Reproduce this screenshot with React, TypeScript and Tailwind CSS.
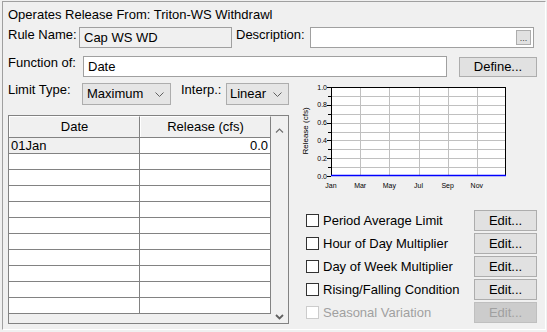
import React from 'react';

const rows = Array.from({ length: 11 }, (_, i) => i);
const options = [
  { label: 'Period Average Limit', enabled: true },
  { label: 'Hour of Day Multiplier', enabled: true },
  { label: 'Day of Week Multiplier', enabled: true },
  { label: 'Rising/Falling Condition', enabled: true },
  { label: 'Seasonal Variation', enabled: false },
];

const Chevron: React.FC = () => (
  <svg width="9" height="5" viewBox="0 0 9 5" className="ml-auto mr-[6px]">
    <polyline points="0.5,0.5 4.5,4.5 8.5,0.5" fill="none" stroke="#606060" strokeWidth="1" />
  </svg>
);

const Chart: React.FC = () => {
  const left = 31;
  const right = 206;
  const top = 4;
  const bottom = 93;
  const step = (bottom - top) / 10;
  const months = ['Jan', 'Mar', 'May', 'Jul', 'Sep', 'Nov'];
  const colStep = (right - left) / 6;
  return (
    <svg width="220" height="127" viewBox="0 0 220 127" className="font-['Liberation_Sans',Arial,sans-serif]">
      <rect x={left} y={top} width={right - left} height={bottom - top} fill="#ffffff" />
      {Array.from({ length: 9 }, (_, i) => (
        <line key={'h' + i} x1={left} x2={right} y1={Math.round(top + step * (i + 1)) + 0.5} y2={Math.round(top + step * (i + 1)) + 0.5} stroke="#c0c0c0" />
      ))}
      {Array.from({ length: 5 }, (_, i) => (
        <line key={'v' + i} x1={Math.round(left + colStep * (i + 1)) + 0.5} x2={Math.round(left + colStep * (i + 1)) + 0.5} y1={top} y2={bottom} stroke="#c0c0c0" />
      ))}
      {Array.from({ length: 11 }, (_, i) => (
        <line key={'t' + i} x1={left - (i % 2 === 0 ? 4 : 3)} x2={left} y1={Math.round(top + step * i) + 0.5} y2={Math.round(top + step * i) + 0.5} stroke="#000000" />
      ))}
      <rect x={left + 0.5} y={top + 0.5} width={right - left - 1} height={bottom - top - 1} fill="none" stroke="#000000" />
      <line x1={left} x2={right} y1={bottom - 0.5} y2={bottom - 0.5} stroke="#0000ff" strokeWidth="1.5" />
      {['1.0', '0.8', '0.6', '0.4', '0.2', '0.0'].map((t, i) => (
        <text key={t} x={left - 4} y={top + step * 2 * i + 2.5} textAnchor="end" fontSize="7" fill="#000">{t}</text>
      ))}
      {months.map((m, i) => (
        <text key={m} x={left + colStep * i} y={bottom + 12} textAnchor="middle" fontSize="7" fill="#000">{m}</text>
      ))}
      <text x={8} y={48} textAnchor="middle" fontSize="8" fill="#000" transform="rotate(-90 8 48)">Release (cfs)</text>
    </svg>
  );
};

export default function App() {
  return (
    <div className="w-[547px] h-[332px] bg-[#f0f0f0] pt-px pl-[2px] font-['Liberation_Sans',Arial,sans-serif] text-[13px] text-black">
      <div className="w-[544px] h-[329px] border border-[#a0a0a0] border-r-white border-b-white flex flex-col pl-[5px]">
        <div className="h-[16px] mt-[5px] leading-[16px]">Operates Release From: Triton-WS Withdrawl</div>

        {/* Rule name / description */}
        <div className="mt-[4px] h-[21px] flex items-center">
          <span className="w-[71px] self-start leading-[16px]">Rule Name:</span>
          <div className="w-[153px] h-[21px] border border-[#a0a0a0] bg-[#f0f0f0] pl-[4px] leading-[19px]">Cap WS WD</div>
          <span className="w-[74px] ml-[4px] self-start leading-[16px]">Description:</span>
          <div className="w-[224px] h-[21px] border border-[#a0a0a0] bg-white flex items-center justify-end pr-[2px]">
            <div className="w-[15px] h-[15px] bg-[#e1e1e1] border border-[#adadad] text-[9px] leading-[14px] text-center text-[#444]">...</div>
          </div>
        </div>

        {/* Function of */}
        <div className="mt-[8px] h-[21px] flex items-center">
          <span className="w-[75px] self-start leading-[13px]">Function of:</span>
          <div className="w-[364px] h-[21px] border border-[#a0a0a0] bg-white pl-[4px] leading-[19px]">Date</div>
          <div className="ml-[12px] w-[78px] h-[20px] bg-[#e1e1e1] border border-[#adadad] text-center leading-[18px]">Define...</div>
        </div>

        <div className="mt-[6px] flex">
          {/* Left column */}
          <div className="w-[281px] flex flex-col">
            <div className="h-[22px] flex items-center">
              <span className="w-[74px] self-start leading-[13px]">Limit Type:</span>
              <div className="w-[89px] h-[22px] border border-[#adadad] bg-[#e5e5e5] flex items-center pl-[4px]">
                Maximum
                <Chevron />
              </div>
              <span className="w-[45px] ml-[10px] self-start leading-[13px]">Interp.:</span>
              <div className="w-[63px] h-[22px] border border-[#adadad] bg-[#e5e5e5] flex items-center pl-[3px]">
                Linear
                <Chevron />
              </div>
            </div>

            {/* Table */}
            <div className="mt-[10px] h-[209px] border border-[#828282] flex">
              <div className="w-[262px] flex flex-col">
                <div className="h-[22px] flex border-b border-[#828282]">
                  <div className="w-[131px] border-r border-[#828282] border-t border-l border-t-white border-l-white bg-[#f0f0f0] text-center leading-[20px]">Date</div>
                  <div className="w-[131px] border-r border-[#828282] border-t border-l border-t-white border-l-white bg-[#f0f0f0] text-center leading-[20px]">Release (cfs)</div>
                </div>
                {rows.map(i => (
                  <div key={i} className="h-[16px] flex border-b border-[#828282]">
                    <div className={`w-[131px] border-r border-[#828282] pl-[2px] leading-[15px] ${i === 0 ? 'bg-[#f0f0f0]' : 'bg-white'}`}>
                      {i === 0 ? '01Jan' : ''}
                    </div>
                    <div className="w-[131px] border-r border-[#828282] bg-white pr-[2px] text-right leading-[15px]">
                      {i === 0 ? '0.0' : ''}
                    </div>
                  </div>
                ))}
                <div className="flex-1 bg-[#f0f0f0]" />
              </div>
              <div className="w-[17px] bg-[#f0f0f0] flex flex-col items-center justify-between pt-[12px] pb-[3px]">
                <svg width="9" height="5" viewBox="0 0 9 5">
                  <polyline points="1,4.5 4.5,1 8,4.5" fill="none" stroke="#707070" strokeWidth="1.2" />
                </svg>
                <svg width="9" height="6" viewBox="0 0 9 6">
                  <polyline points="1,1 4.5,4.5 8,1" fill="none" stroke="#606060" strokeWidth="1.8" />
                </svg>
              </div>
            </div>
          </div>

          {/* Right column */}
          <div className="flex-1 flex flex-col">
            <div className="ml-[11px]">
              <Chart />
            </div>
            <div className="flex flex-col gap-[2px] pl-[17px]">
              {options.map(o => (
                <div key={o.label} className="h-[21px] flex items-center">
                  <div className={`w-[13px] h-[13px] border bg-white ${o.enabled ? 'border-[#333333]' : 'border-[#cccccc]'}`} />
                  <span className={`ml-[4px] w-[151px] ${o.enabled ? 'text-black' : 'text-[#a0a0a0]'}`}>{o.label}</span>
                  <div className={`w-[63px] h-[21px] border text-center leading-[19px] ${o.enabled ? 'bg-[#e1e1e1] border-[#adadad]' : 'bg-[#cccccc] border-[#bfbfbf] text-[#a0a0a0]'}`}>Edit...</div>
                </div>
              ))}
            </div>
          </div>
        </div>
      </div>
    </div>
  );
}
